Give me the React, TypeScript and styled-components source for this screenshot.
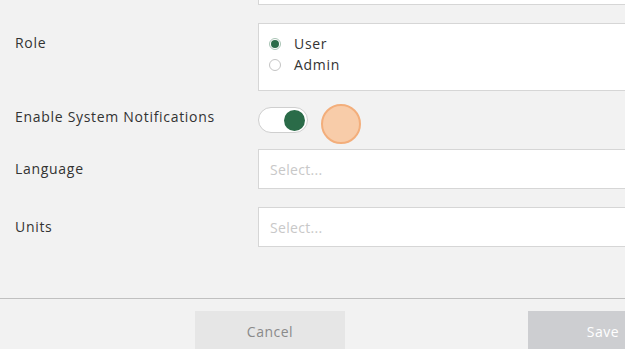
import styled, { createGlobalStyle } from 'styled-components';

const GlobalStyle = createGlobalStyle`
  html, body {
    margin: 0;
    padding: 0;
    background-color: #f2f2f2;
    overflow: hidden;
  }
  body {
    font-family: 'Open Sans', 'Liberation Sans', sans-serif;
    color: #333333;
  }
`;

const Page = styled.div`
  height: 100vh;
  display: flex;
  flex-direction: column;
  overflow: hidden;
`;

const Form = styled.div`
  flex: 1;
  width: 780px;
  margin-top: -35px;
  display: grid;
  grid-template-columns: 258px 1fr;
  row-gap: 18px;
  align-content: start;
  align-items: start;
`;

const Label = styled.div<{ $offset?: number }>`
  padding-left: 15px;
  margin-top: ${(p) => (p.$offset ?? 10)}px;
  font-size: 14px;
  line-height: 20px;
  letter-spacing: 0.7px;
  color: #333333;
`;

const Field = styled.div`
  box-sizing: border-box;
  height: 40px;
  background-color: #ffffff;
  border: 1px solid #d6d6d6;
  display: flex;
  align-items: center;
  padding-left: 11px;
  font-size: 14px;
  letter-spacing: 0.3px;
  color: #c8c8c8;
`;

const RadioBox = styled.div`
  box-sizing: border-box;
  height: 68px;
  background-color: #ffffff;
  border: 1px solid #d6d6d6;
  padding: 9px 10px;
  display: flex;
  flex-direction: column;
`;

const RadioRow = styled.label`
  display: flex;
  align-items: center;
  height: 21px;
  font-size: 14px;
  letter-spacing: 0.7px;
  color: #333333;
`;

const RadioDot = styled.span<{ $checked?: boolean }>`
  box-sizing: border-box;
  width: 12px;
  height: 12px;
  border-radius: 50%;
  margin-right: 13px;
  border: 1px solid ${(p) => (p.$checked ? '#a9c4b5' : '#c4c4c4')};
  background-color: #ffffff;
  display: flex;
  align-items: center;
  justify-content: center;

  &::after {
    content: '';
    width: 8px;
    height: 8px;
    border-radius: 50%;
    background-color: ${(p) => (p.$checked ? '#2a6b48' : 'transparent')};
  }
`;

const ToggleCell = styled.div`
  position: relative;
  height: 22px;
  display: flex;
  align-items: center;
`;

const Switch = styled.div`
  box-sizing: border-box;
  width: 50px;
  height: 26px;
  border-radius: 13px;
  border: 1px solid #cfcfcf;
  background-color: #ffffff;
  display: flex;
  align-items: center;
  justify-content: flex-end;
  padding-right: 2px;
`;

const Knob = styled.span`
  width: 21px;
  height: 21px;
  border-radius: 50%;
  background-color: #2a6b48;
`;

const ClickHalo = styled.span`
  position: absolute;
  left: 63px;
  top: -5px;
  box-sizing: border-box;
  width: 40px;
  height: 40px;
  border-radius: 50%;
  background-color: #f8cca9;
  border: 2px solid #f3ae7b;
`;

const Footer = styled.div`
  flex: 0 0 auto;
  height: 51px;
  box-sizing: border-box;
  border-top: 1px solid #c0c0c0;
  padding: 12px 0 0 195px;
  display: flex;
  gap: 183px;
  overflow: hidden;
`;

const Button = styled.button<{ $primary?: boolean }>`
  flex: 0 0 150px;
  height: 40px;
  border: none;
  font-family: inherit;
  font-size: 14px;
  letter-spacing: 0.5px;
  background-color: ${(p) => (p.$primary ? '#cdced1' : '#e6e6e6')};
  color: ${(p) => (p.$primary ? '#ffffff' : '#8a8a8a')};
`;

export default function App() {
  return (
    <Page>
      <GlobalStyle />
      <Form>
        <Label />
        <Field />

        <Label>Role</Label>
        <RadioBox>
          <RadioRow>
            <RadioDot $checked />
            User
          </RadioRow>
          <RadioRow>
            <RadioDot />
            Admin
          </RadioRow>
        </RadioBox>

        <Label $offset={-2}>Enable System Notifications</Label>
        <ToggleCell>
          <Switch>
            <Knob />
          </Switch>
          <ClickHalo />
        </ToggleCell>

        <Label>Language</Label>
        <Field>Select...</Field>

        <Label>Units</Label>
        <Field>Select...</Field>
      </Form>
      <Footer>
        <Button>Cancel</Button>
        <Button $primary>Save</Button>
      </Footer>
    </Page>
  );
}
